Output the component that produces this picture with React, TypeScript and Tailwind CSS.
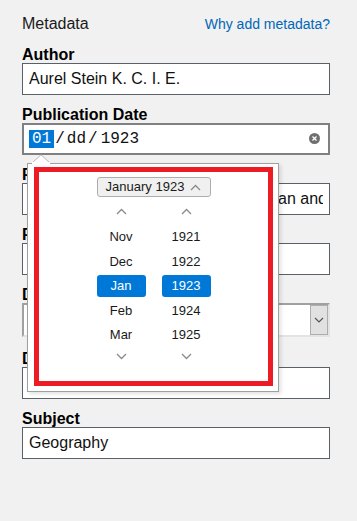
import React from "react";

function ChevronUp({ className = "" }: { className?: string }) {
  return (
    <svg width="11" height="7" viewBox="0 0 11 7" className={className}>
      <path d="M1 6 L5.5 1.5 L10 6" fill="none" stroke="#8a8a8a" strokeWidth="1.3" />
    </svg>
  );
}

function ChevronDown({ className = "" }: { className?: string }) {
  return (
    <svg width="11" height="7" viewBox="0 0 11 7" className={className}>
      <path d="M1 1 L5.5 5.5 L10 1" fill="none" stroke="#8a8a8a" strokeWidth="1.3" />
    </svg>
  );
}

function Field({ label, value, mb = "mb-3" }: { label: string; value: string; mb?: string }) {
  return (
    <div className={`flex flex-col ${mb}`}>
      <div className="text-[16px] font-bold leading-4 text-black">{label}</div>
      <div className="flex h-8 items-center border border-[#5a6068] bg-white pl-[6px] pr-[6px] text-[16px] text-[#111]">
        <span className="block min-w-0 flex-1 overflow-hidden whitespace-nowrap leading-5">{value}</span>
      </div>
    </div>
  );
}

const months = ["Nov", "Dec", "Jan", "Feb", "Mar"];
const years = ["1921", "1922", "1923", "1924", "1925"];

function Column({ items, selected }: { items: string[]; selected: number }) {
  return (
    <div className="flex flex-col items-center">
      <div className="flex h-[28px] items-center justify-center">
        <ChevronUp />
      </div>
      {items.map((it, i) => (
        <div key={it} className="flex h-[24.5px] w-full items-center justify-center">
          {i === selected ? (
            <div className="flex h-[22px] w-full items-center justify-center rounded-[3px] bg-[#0078d7] text-white">
              {it}
            </div>
          ) : (
            <span className="text-[#1a1a1a]">{it}</span>
          )}
        </div>
      ))}
      <div className="flex h-[18px] items-center justify-center">
        <ChevronDown />
      </div>
    </div>
  );
}

export default function App() {
  return (
    <div className="relative min-h-[521px] w-[357px] bg-[#f1f1f1] pl-[22px] pr-[27px] pt-[13.5px] font-['Liberation_Sans',Arial,sans-serif]">
      <div className="flex h-5 items-baseline justify-between leading-5">
        <span className="text-[16px] text-[#1a1a1a]">Metadata</span>
        <span className="text-[14px] text-[#0067b8]">Why add metadata?</span>
      </div>

      <div className="mt-[13px] flex flex-col">
        <Field label="Author" value="Aurel Stein K. C. I. E." />

        <div className="mb-3 flex flex-col">
          <div className="text-[16px] font-bold leading-4 text-black">Publication Date</div>
          <div className="flex h-8 items-center border-2 border-[#808080] bg-white pl-[5px] pr-[8px] font-['Liberation_Mono',monospace] text-[16px] leading-5 text-[#111]">
            <span className="flex h-[18px] items-center bg-[#0078d7] px-[3px] text-white">01</span>
            <span className="ml-[1px]">/</span>
            <span className="ml-[2px]">dd</span>
            <span className="ml-[2px]">/</span>
            <span className="ml-[3px]">1923</span>
            <span className="ml-auto flex h-[11px] w-[11px] items-center justify-center rounded-full bg-[#6f6f6f]">
              <svg width="7" height="7" viewBox="0 0 7 7">
                <path d="M1.5 1.5 L5.5 5.5 M5.5 1.5 L1.5 5.5" stroke="#fff" strokeWidth="1.3" />
              </svg>
            </span>
          </div>
        </div>

        <Field label="Publication Title" value="Old Explorations in Chinese Turkistan and Kansu" />
        <Field label="Publisher" value="Macmillan" />

        <div className="mb-[14px] flex flex-col">
          <div className="text-[16px] font-bold leading-4 text-black">Document Type</div>
          <div className="flex h-[34px] justify-end border-2 border-b-[#e3e3e3] border-l-[#a0a0a0] border-r-[#e3e3e3] border-t-[#a0a0a0] bg-white">
            <div className="flex w-[18px] items-center justify-center border border-[#adadad] bg-[#e1e1e1]">
              <svg width="10" height="6" viewBox="0 0 10 6">
                <path d="M1 1 L5 5 L9 1" fill="none" stroke="#555" strokeWidth="1.2" />
              </svg>
            </div>
          </div>
        </div>

        <Field label="Description" value="Map of Chinese Turkistan" />
        <Field label="Subject" value="Geography" />
      </div>

      {/* Date picker popup */}
      <svg className="absolute left-[31px] top-[154px]" width="20" height="10" viewBox="0 0 20 10">
        <path d="M0.5 9.5 L10 0.8 L19.5 9.5" fill="#ffffff" stroke="#b8b8b8" strokeWidth="1" />
      </svg>
      <div className="absolute left-[27px] top-[163px] h-[229px] w-[252px] border border-[#a0a0a0] bg-white pb-[5px] pl-[6px] pr-[5px] pt-[3px] shadow-[2px_2px_4px_rgba(0,0,0,0.12)]">
        <div className="flex h-[219px] w-[239px] flex-col items-center border-[5px] border-[#ed1c24] pt-[5px] text-[13px] leading-4">
          <div className="flex h-5 w-[114px] items-center justify-center gap-[6px] rounded-[3px] border border-[#adadad] bg-[#f0f0f0] text-[#1a1a1a]">
            <span className="whitespace-nowrap">January 1923</span>
            <ChevronUp />
          </div>
          <div className="grid grid-cols-[49px_49px] gap-x-4">
            <Column items={months} selected={2} />
            <Column items={years} selected={2} />
          </div>
        </div>
      </div>
      <svg className="absolute left-[32px] top-[162px]" width="18" height="3" viewBox="0 0 18 3">
        <rect x="0" y="0" width="18" height="3" fill="#ffffff" />
      </svg>
    </div>
  );
}
